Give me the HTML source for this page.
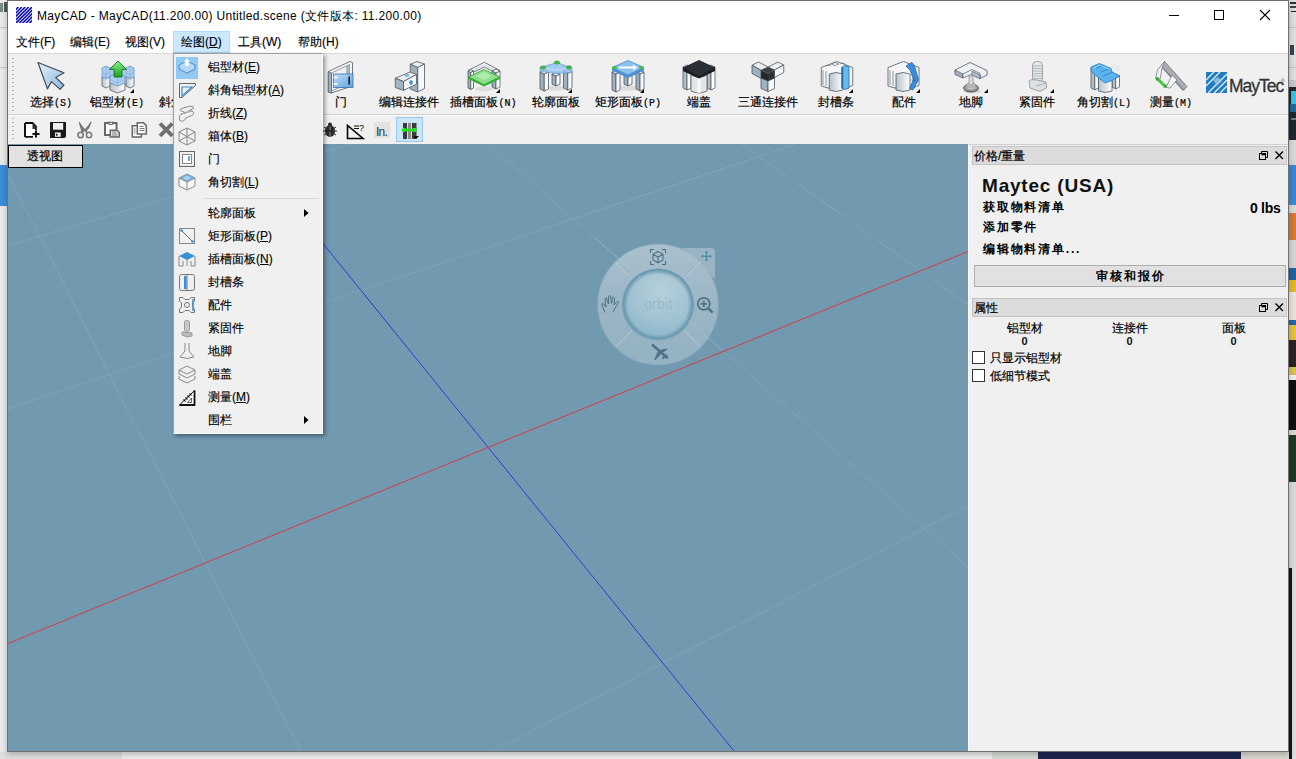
<!DOCTYPE html>
<html><head><meta charset="utf-8">
<style>
*{box-sizing:border-box;margin:0;padding:0}
html,body{width:1296px;height:759px;overflow:hidden;background:#ececec;font-family:"Liberation Sans",sans-serif;color:#000;position:relative}
.a{position:absolute}
.t{position:absolute;white-space:nowrap;font-size:12px;line-height:14px}
.lb{position:absolute;white-space:nowrap;font-size:12px;line-height:14px;text-align:center;-webkit-text-stroke:0.2px #000}
.ss{-webkit-text-stroke:0.2px #000}
.m{font-family:"Liberation Mono",monospace;font-size:10px}
svg{position:absolute;overflow:visible}
</style></head>
<body>

<div class="a" style="left:0;top:0;width:7px;height:759px;background:#e9e9e9"></div>
<div class="a" style="left:0;top:165px;width:7px;height:41px;background:#3b8fd6"></div>
<div class="a" style="left:0;top:752px;width:122px;height:7px;background:#dedede"></div>
<div class="a" style="left:122px;top:752px;width:870px;height:7px;background:#ededed"></div>
<div class="a" style="left:992px;top:752px;width:46px;height:7px;background:#d6dcd4"></div>
<div class="a" style="left:1038px;top:752px;width:203px;height:7px;background:#1d2550"></div>
<div class="a" style="left:1241px;top:752px;width:55px;height:7px;background:#d9d6d0"></div>
<div class="a" style="left:1289px;top:0px;width:7px;height:80px;background:#dedede"></div>
<div class="a" style="left:1289px;top:80px;width:7px;height:7px;background:#c8c8c8"></div>
<div class="a" style="left:1289px;top:87px;width:7px;height:53px;background:#1f272e"></div>
<div class="a" style="left:1289px;top:140px;width:7px;height:25px;background:#d8d8d8"></div>
<div class="a" style="left:1289px;top:165px;width:7px;height:40px;background:#3d87d0"></div>
<div class="a" style="left:1289px;top:205px;width:7px;height:8px;background:#d8d8d8"></div>
<div class="a" style="left:1289px;top:213px;width:7px;height:27px;background:#d67a36"></div>
<div class="a" style="left:1289px;top:240px;width:7px;height:28px;background:#d4d4d4"></div>
<div class="a" style="left:1289px;top:268px;width:7px;height:12px;background:#2362a2"></div>
<div class="a" style="left:1289px;top:280px;width:7px;height:12px;background:#e4b828"></div>
<div class="a" style="left:1289px;top:292px;width:7px;height:28px;background:#e8e4dc"></div>
<div class="a" style="left:1289px;top:320px;width:7px;height:5px;background:#2a62a0"></div>
<div class="a" style="left:1289px;top:325px;width:7px;height:15px;background:#e2c040"></div>
<div class="a" style="left:1289px;top:340px;width:7px;height:27px;background:#2e2222"></div>
<div class="a" style="left:1289px;top:367px;width:7px;height:8px;background:#d8c050"></div>
<div class="a" style="left:1289px;top:375px;width:7px;height:5px;background:#eeeeee"></div>
<div class="a" style="left:1289px;top:380px;width:7px;height:50px;background:#120e0e"></div>
<div class="a" style="left:1289px;top:430px;width:7px;height:5px;background:#d8d8d8"></div>
<div class="a" style="left:1289px;top:435px;width:7px;height:47px;background:#1d3b24"></div>
<div class="a" style="left:1289px;top:482px;width:7px;height:86px;background:#d9d9d9"></div>
<div class="a" style="left:1289px;top:568px;width:7px;height:191px;background:#12141c"></div>
<div class="a" style="left:1292px;top:568px;width:4px;height:191px;background:#dcdcdc"></div>
<div class="a" style="left:1290px;top:2px;width:6px;height:2px;background:#333"></div>
<div class="a" style="left:1290px;top:6px;width:6px;height:2px;background:#444"></div>
<div class="a" style="left:1291px;top:11px;width:5px;height:1px;background:#222"></div>
<div class="a" style="left:1289px;top:27px;width:7px;height:1px;background:#c4c4c4"></div>
<div class="a" style="left:1289px;top:67px;width:7px;height:1px;background:#c4c4c4"></div>
<div class="a" style="left:1290px;top:45px;width:4px;height:10px;background:#3a4250"></div>
<div class="a" style="left:0;top:27px;width:7px;height:1px;background:#c8c8c8"></div>
<div class="a" style="left:0;top:67px;width:7px;height:1px;background:#c8c8c8"></div>
<div class="a" style="left:0;top:3px;width:3px;height:9px;background:#7a8a80"></div>
<div class="a" style="left:4px;top:2px;width:3px;height:10px;background:#505560"></div>
<div class="a" style="left:1291px;top:91px;width:5px;height:13px;background:#36c4e6"></div>
<div class="a" style="left:1290px;top:104px;width:6px;height:8px;background:#1f6a9a"></div>
<div class="a" style="left:1291px;top:118px;width:5px;height:2px;background:#6a7a88"></div>
<div class="a" style="left:7px;top:0;width:1282px;height:752px;background:#fff;border:1px solid #707070;box-shadow:0 2px 6px rgba(0,0,0,.25)"></div>
<svg style="left:16px;top:7px;overflow:hidden" width="16" height="16" viewBox="0 0 16 16"><rect width="16" height="16" fill="#fff"/><path d="M-19.0 18 L-1.0 0 M-15.6 18 L2.4 0 M-12.2 18 L5.8 0 M-8.8 18 L9.2 0 M-5.4 18 L12.6 0 M-2.0 18 L16.0 0 M1.4 18 L19.4 0 M4.8 18 L22.8 0 M8.2 18 L26.2 0 M11.6 18 L29.6 0 M15.0 18 L33.0 0" stroke="#1010b0" stroke-width="1.6"/></svg>
<div class="t" style="left:37px;top:9px;letter-spacing:0.33px;color:#000">MayCAD - MayCAD(11.200.00) Untitled.scene (文件版本: 11.200.00)</div>
<svg style="left:1160px;top:0" width="128" height="31">
<path d="M9 15.5 H19" stroke="#000" stroke-width="1"/>
<rect x="54.5" y="10.5" width="9" height="9" fill="none" stroke="#000" stroke-width="1"/>
<path d="M100 10 L110 20 M110 10 L100 20" stroke="#000" stroke-width="1.1"/>
</svg>
<div class="a" style="left:173px;top:31px;width:57px;height:22px;background:#cce8ff;border:1px solid #b3dbff;border-bottom-color:#a6cbe8"></div>
<div class="t" style="left:16px;top:35px;-webkit-text-stroke:.15px #000">文件(F)</div>
<div class="t" style="left:70px;top:35px;-webkit-text-stroke:.15px #000">编辑(E)</div>
<div class="t" style="left:125px;top:35px;-webkit-text-stroke:.15px #000">视图(V)</div>
<div class="t" style="left:181px;top:35px;-webkit-text-stroke:.15px #000">绘图(<u>D</u>)</div>
<div class="t" style="left:238px;top:35px;-webkit-text-stroke:.15px #000">工具(W)</div>
<div class="t" style="left:298px;top:35px;-webkit-text-stroke:.15px #000">帮助(H)</div>
<div class="a" style="left:8px;top:53px;width:1280px;height:1px;background:#dadada"></div>
<div class="a" style="left:8px;top:54px;width:1280px;height:90px;background:#f0f0f0"></div>
<div class="a" style="left:8px;top:114px;width:1280px;height:1px;background:#d0d0d0"></div>
<div class="a" style="left:8px;top:115px;width:1280px;height:1px;background:#fafafa"></div>
<div class="a" style="left:12px;top:58px;width:2px;height:54px;background:repeating-linear-gradient(#b4b4b4 0 1.5px,transparent 1.5px 4px)"></div>
<div class="a" style="left:12px;top:118px;width:2px;height:24px;background:repeating-linear-gradient(#b4b4b4 0 1.5px,transparent 1.5px 4px)"></div>
<div class="lb" style="left:30px;top:95px;width:41px">选择<span class="m">(S)</span></div>
<div class="lb" style="left:90px;top:95px;width:54px">铝型材<span class="m">(E)</span></div>
<div class="lb" style="left:156px;top:95px;width:84px">斜角铝型材<span class="m">(A)</span></div>
<div class="lb" style="left:335px;top:95px;width:11px">门</div>
<div class="lb" style="left:379px;top:95px;width:60px">编辑连接件</div>
<div class="lb" style="left:450px;top:95px;width:67px">插槽面板<span class="m">(N)</span></div>
<div class="lb" style="left:532px;top:95px;width:48px">轮廓面板</div>
<div class="lb" style="left:595px;top:95px;width:65px">矩形面板<span class="m">(P)</span></div>
<div class="lb" style="left:687px;top:95px;width:24px">端盖</div>
<div class="lb" style="left:738px;top:95px;width:60px">三通连接件</div>
<div class="lb" style="left:818px;top:95px;width:36px">封槽条</div>
<div class="lb" style="left:891px;top:95px;width:25px">配件</div>
<div class="lb" style="left:959px;top:95px;width:24px">地脚</div>
<div class="lb" style="left:1019px;top:95px;width:36px">紧固件</div>
<div class="lb" style="left:1077px;top:95px;width:54px">角切割<span class="m">(L)</span></div>
<div class="lb" style="left:1150px;top:95px;width:42px">测量<span class="m">(M)</span></div>
<svg style="left:0;top:0" width="1296" height="759"><defs><linearGradient id="sg" x1="0" y1="0" x2="1" y2="1"><stop offset="0" stop-color="#e4f0fa"/><stop offset="1" stop-color="#8db6da"/></linearGradient></defs><path d="M38 62.5 L64 72.7 L55.7 77.4 L64 85.2 L60 89.4 L51.5 81.6 L47.4 88.9 Z" fill="url(#sg)" stroke="#3e4a56" stroke-width="1.2" stroke-linejoin="round"/><defs><linearGradient id="ag" x1="0" y1="0" x2="0" y2="1"><stop offset="0" stop-color="#8af08a"/><stop offset="1" stop-color="#1aa01e"/></linearGradient><linearGradient id="wg" x1="0" y1="0" x2="1" y2="0"><stop offset="0" stop-color="#b9c1c8"/><stop offset="1" stop-color="#ffffff"/></linearGradient></defs><path d="M102 77 V86 L106 88 L110 86 V77 Z" fill="url(#wg)" stroke="#555d65" stroke-width=".8"/><path d="M126 77 V86 L130 88 L134 86 V77 Z" fill="url(#wg)" stroke="#555d65" stroke-width=".8"/><path d="M102 68 L106 66 L110 68 L118 64.5 L126 68 L130 66 L134 68 V77 L130 79 L126 77 L118 81 L110 77 L106 79 L102 77 Z" fill="#9cc6f0" fill-opacity=".8" stroke="#5a8ccc" stroke-width=".7"/><path d="M102 72.5 L106 74.5 L110 72.5 M126 72.5 L130 74.5 L134 72.5 M106 66 V79 M130 66 V79 M110 68 V77 M126 68 V77" fill="none" stroke="#7aaae0" stroke-width=".6"/><path d="M110 83 V90 L117.5 93 L125 90 V83 Z" fill="url(#wg)" stroke="#555d65" stroke-width=".8"/><path d="M110 76 L117.5 73 L125 76 V83 L117.5 86 L110 83 Z" fill="#a8d0f4" fill-opacity=".85" stroke="#5a8ccc" stroke-width=".7"/><path d="M110 79.5 L117.5 82.5 L125 79.5 M117.5 76 V86" fill="none" stroke="#7aaae0" stroke-width=".6"/><path d="M118 61 L126.5 69.5 L122 69.5 L122 77 L114 77 L114 69.5 L109.5 69.5 Z" fill="url(#ag)" stroke="#15741a" stroke-width=".9" stroke-linejoin="round"/><path d="M134 89 V93 H130 Z" fill="#000"/><path d="M328.3 71.5 L350 61.5 L352.5 62.7 L352.5 86 L331 93 L328.3 92 Z" fill="#f7f9fa" stroke="#4e5862" stroke-width=".8"/><path d="M331.5 73 L349.5 64.5 V83 L331.5 91 Z" fill="#eef1f3" stroke="#6a747e" stroke-width=".7"/><path d="M328.3 71.5 L331.5 73 V93 L328.3 92 Z" fill="#9fb0be" stroke="#4e5862" stroke-width=".7"/><path d="M346 66 L349.5 64.5 V80 L346 81.5 Z" fill="#a8b6c2"/><defs><linearGradient id="dg" x1="0" y1="0" x2="1" y2="1"><stop offset="0" stop-color="#c4e0f8"/><stop offset="1" stop-color="#5fa2e0"/></linearGradient></defs><rect x="333.5" y="74" width="19.5" height="13.5" fill="url(#dg)" stroke="#3a70b0" stroke-width=".8"/><path d="M349.2 77 V84" stroke="#1a1a1a" stroke-width="1.6" stroke-linecap="round"/><path d="M334 77.5 H337 M334 84 H337" stroke="#fff" stroke-width="1.3" stroke-linecap="round"/><path d="M410.25 64.25 L417 61.5 L424.5 64 L417.75 67.5 Z" fill="#e8edf0" stroke="#4e5862" stroke-width=".8"/><path d="M410.25 64.25 L417.75 67.5 V92 L410.25 89 Z" fill="#9fb0be" stroke="#4e5862" stroke-width=".8"/><path d="M417.75 67.5 L424.5 64 V88.5 L417.75 92 Z" fill="#f6f8f9" stroke="#4e5862" stroke-width=".8"/><path d="M395.25 78.25 L410 72 L416.5 74.5 L403.5 81.5 Z" fill="#e8edf0" stroke="#4e5862" stroke-width=".8"/><path d="M395.25 78.25 L403.5 81.5 V90.5 L395.25 87.5 Z" fill="#a4b4c2" stroke="#4e5862" stroke-width=".8"/><path d="M403.5 81.5 L416.5 74.5 V84 L403.5 90.5 Z" fill="#f2f5f7" stroke="#4e5862" stroke-width=".8"/><ellipse cx="407" cy="75.5" rx="2.4" ry="1.2" fill="#6ab0e8"/><ellipse cx="411" cy="82.5" rx="1.4" ry="2" fill="#4a9ae0" stroke="#1f5ea8" stroke-width=".5"/><path d="M468 70.5 L484.3 62.3 L499.8 70.5 L495.5 72.7 L484.3 67 L472.5 72.7 Z" fill="#f4f6f8" stroke="#4e5862" stroke-width=".8"/><path d="M472 71 L484.3 65 L496 71" fill="none" stroke="#aab4bc" stroke-width=".6"/><path d="M468 71 L470.75 72.375 L470.75 89.375 L468 88 Z" fill="#9fb0be" stroke="#4e5862" stroke-width=".8"/><path d="M470.75 72.375 L473.5 71 L473.5 88 L470.75 89.375 Z" fill="#ffffff" stroke="#4e5862" stroke-width=".8"/><path d="M468 71 L470.75 69.625 L473.5 71 L470.75 72.375 Z" fill="#eef2f4" stroke="#4e5862" stroke-width=".8"/><path d="M492 71 L496.0 73.0 L496.0 89.0 L492 87 Z" fill="#9fb0be" stroke="#4e5862" stroke-width=".8"/><path d="M496.0 73.0 L500 71 L500 87 L496.0 89.0 Z" fill="#ffffff" stroke="#4e5862" stroke-width=".8"/><path d="M492 71 L496.0 69.0 L500 71 L496.0 73.0 Z" fill="#eef2f4" stroke="#4e5862" stroke-width=".8"/><ellipse cx="484" cy="89" rx="9" ry="2.5" fill="#000" opacity=".08"/><path d="M468.5 77 L484 69.5 L500 77 L484 84.5 Z" fill="#8ee08e" stroke="#2a9a2a" stroke-width=".8"/><path d="M468.5 77 L484 84.5 L500 77 V79 L484 86.5 L468.5 79 Z" fill="#2fae2f"/><path d="M476 76 L484 72 L492 76 L484 80 Z" fill="#c4f2c4" opacity=".6"/><path d="M500 89 V93 H496 Z" fill="#000"/><ellipse cx="556" cy="88" rx="10" ry="3" fill="#000" opacity=".08"/><path d="M552 74 L556.0 76.0 L556.0 86.0 L552 84 Z" fill="#9fb0be" stroke="#4e5862" stroke-width=".8"/><path d="M556.0 76.0 L560 74 L560 84 L556.0 86.0 Z" fill="#f6f8f9" stroke="#4e5862" stroke-width=".8"/><path d="M552 74 L556.0 72.0 L560 74 L556.0 76.0 Z" fill="#eef2f4" stroke="#4e5862" stroke-width=".8"/><path d="M540 72 L544.25 74.125 L544.25 91.125 L540 89 Z" fill="#9fb0be" stroke="#4e5862" stroke-width=".8"/><path d="M544.25 74.125 L548.5 72 L548.5 89 L544.25 91.125 Z" fill="#f6f8f9" stroke="#4e5862" stroke-width=".8"/><path d="M540 72 L544.25 69.875 L548.5 72 L544.25 74.125 Z" fill="#eef2f4" stroke="#4e5862" stroke-width=".8"/><path d="M563.5 71 L567.75 73.125 L567.75 90.125 L563.5 88 Z" fill="#9fb0be" stroke="#4e5862" stroke-width=".8"/><path d="M567.75 73.125 L572 71 L572 88 L567.75 90.125 Z" fill="#f6f8f9" stroke="#4e5862" stroke-width=".8"/><path d="M563.5 71 L567.75 68.875 L572 71 L567.75 73.125 Z" fill="#eef2f4" stroke="#4e5862" stroke-width=".8"/><path d="M540 67.5 L557 62.5 L572 68 V72.5 L556 73.5 L540 71.5 Z" fill="#93c3ee" fill-opacity=".85" stroke="#5a96cc" stroke-width=".6"/><path d="M540 67.5 L556 70 L572 68" fill="none" stroke="#cfe6fa" stroke-width=".8"/><ellipse cx="543" cy="67.5" rx="2.8" ry="1.6" fill="#3fbf3f" stroke="#1f8a25" stroke-width=".5"/><ellipse cx="557" cy="62.5" rx="2.8" ry="1.6" fill="#3fbf3f" stroke="#1f8a25" stroke-width=".5"/><ellipse cx="569" cy="67.3" rx="2.8" ry="1.6" fill="#3fbf3f" stroke="#1f8a25" stroke-width=".5"/><path d="M572 89 V93 H568 Z" fill="#000"/><ellipse cx="628" cy="88" rx="10" ry="3" fill="#000" opacity=".08"/><path d="M624 75 L628.0 77.0 L628.0 86.0 L624 84 Z" fill="#9fb0be" stroke="#4e5862" stroke-width=".8"/><path d="M628.0 77.0 L632 75 L632 84 L628.0 86.0 Z" fill="#f6f8f9" stroke="#4e5862" stroke-width=".8"/><path d="M624 75 L628.0 73.0 L632 75 L628.0 77.0 Z" fill="#eef2f4" stroke="#4e5862" stroke-width=".8"/><path d="M612 72 L616.0 74.0 L616.0 92.0 L612 90 Z" fill="#9fb0be" stroke="#4e5862" stroke-width=".8"/><path d="M616.0 74.0 L620 72 L620 90 L616.0 92.0 Z" fill="#f6f8f9" stroke="#4e5862" stroke-width=".8"/><path d="M612 72 L616.0 70.0 L620 72 L616.0 74.0 Z" fill="#eef2f4" stroke="#4e5862" stroke-width=".8"/><path d="M636 72 L640.0 74.0 L640.0 91.0 L636 89 Z" fill="#9fb0be" stroke="#4e5862" stroke-width=".8"/><path d="M640.0 74.0 L644 72 L644 89 L640.0 91.0 Z" fill="#f6f8f9" stroke="#4e5862" stroke-width=".8"/><path d="M636 72 L640.0 70.0 L644 72 L640.0 74.0 Z" fill="#eef2f4" stroke="#4e5862" stroke-width=".8"/><path d="M612 67.5 L628 60.5 L644 67.5 L628 75 Z" fill="#8cc2ef" stroke="#3f7fc0" stroke-width=".7"/><path d="M612 67.5 L628 75 L644 67.5 V70.5 L628 78 L612 70.5 Z" fill="#4a90d4"/><path d="M619 67.5 H634" stroke="#fff" stroke-width="2"/><path d="M633 64.5 L637.5 67.5 L633 70.5 Z" fill="#fff"/><ellipse cx="614.5" cy="67.5" rx="2.6" ry="1.5" fill="#3fbf3f"/><ellipse cx="641.5" cy="67.5" rx="2.6" ry="1.5" fill="#3fbf3f"/><path d="M644 89 V93 H640 Z" fill="#000"/><path d="M683 67 L687.0 69.0 L687.0 90.0 L683 88 Z" fill="#b4bec6" stroke="#4e5862" stroke-width=".8"/><path d="M687.0 69.0 L691 67 L691 88 L687.0 90.0 Z" fill="#ffffff" stroke="#4e5862" stroke-width=".8"/><path d="M683 67 L687.0 65.0 L691 67 L687.0 69.0 Z" fill="#eef2f4" stroke="#4e5862" stroke-width=".8"/><path d="M707 67 L711.0 69.0 L711.0 90.0 L707 88 Z" fill="#b4bec6" stroke="#4e5862" stroke-width=".8"/><path d="M711.0 69.0 L715 67 L715 88 L711.0 90.0 Z" fill="#ffffff" stroke="#4e5862" stroke-width=".8"/><path d="M707 67 L711.0 65.0 L715 67 L711.0 69.0 Z" fill="#eef2f4" stroke="#4e5862" stroke-width=".8"/><path d="M691 75 Q699 79 707 75 V91 Q699 95 691 91 Z" fill="#e2e5e8" stroke="#4e5862" stroke-width=".8"/><path d="M699 77 V93" stroke="#fff" stroke-width="3" opacity=".8"/><path d="M683 68 L699 60.5 L715 68 L699 75.5 Z" fill="#2b3038" stroke="#15181c" stroke-width=".8"/><path d="M683 68 L699 75.5 L715 68 V71 L699 78.5 L683 71 Z" fill="#1a1d22"/><path d="M752 65.25 L758.5 62 L768 67 L761 70.25 Z" fill="#e9eef0" stroke="#4e5862" stroke-width=".8"/><path d="M752 65.25 L761 70.25 V78.5 L752 73.5 Z" fill="#9fb0be" stroke="#4e5862" stroke-width=".8"/><path d="M768 67 L778 62 L783.75 65 L774.5 70 Z" fill="#e9eef0" stroke="#4e5862" stroke-width=".8"/><path d="M774.5 70 L783.75 65 V72.5 L774.5 77.5 Z" fill="#f6f8f9" stroke="#4e5862" stroke-width=".8"/><path d="M761 78 L768 81 V91.5 L761 88.5 Z" fill="#9fb0be" stroke="#4e5862" stroke-width=".8"/><path d="M768 81 L774.5 78 V88.5 L768 91.5 Z" fill="#f6f8f9" stroke="#4e5862" stroke-width=".8"/><path d="M761 70.25 L768 67 L774.5 70 L768 73.5 Z" fill="#3c3f43"/><path d="M761 70.25 L768 73.5 V81 L761 78 Z" fill="#26292c"/><path d="M768 73.5 L774.5 70 V78 L768 81 Z" fill="#303336"/><defs><linearGradient id="cg" x1="0" y1="0" x2="1" y2="0"><stop offset="0" stop-color="#b8c2ca"/><stop offset="1" stop-color="#ffffff"/></linearGradient></defs><path d="M821.25 67.5 L837 61.5 L852.75 67.5 V85.5 L846 88 L828 88 L821.25 86 Z" fill="#f4f6f7" stroke="#4e5862" stroke-width=".8"/><path d="M823 70 V85 M826 71 V86" stroke="#8a96a0" stroke-width="1"/><path d="M831 64 L835 62.5 L839 64 L835 65.5 Z M826 66 L829 65 L831 66 M840 64 L843 63 L845 64" fill="none" stroke="#6a747e" stroke-width=".7"/><path d="M829.25 74 Q836 71 843 74 V90 Q836 93 829.25 90 Z" fill="url(#cg)" stroke="#4e5862" stroke-width=".8"/><path d="M841.75 67 L845.5 65.5 L849 67 V88 L845.5 89.5 L841.75 88 Z" fill="#6ab8ec" stroke="#1a6aa8" stroke-width=".8"/><path d="M842.5 68 V88.5" stroke="#1a6aa8" stroke-width="1.4"/><path d="M853 89 V93 H849 Z" fill="#000"/><path d="M888 67.5 L903.5 61.5 L919 67.5 V85.5 L912 88 L895 88 L888 86 Z" fill="#f4f6f7" stroke="#4e5862" stroke-width=".8"/><path d="M890 70 V85 M893 71 V86" stroke="#8a96a0" stroke-width="1"/><path d="M896 74 Q903 71 910 74 V90 Q903 93 896 90 Z" fill="url(#cg)" stroke="#4e5862" stroke-width=".8"/><path d="M906 66 L912 62.5 L914.5 66 L918.5 80 L913 90 L909.5 88.5 L913.5 79.5 L910 70 Z" fill="#3a8ee0" stroke="#1a5aa0" stroke-width=".7"/><circle cx="913.5" cy="80" r="1.5" fill="none" stroke="#1a5aa0" stroke-width=".6"/><path d="M920 89 V93 H916 Z" fill="#000"/><defs><radialGradient id="fg" cx="50%" cy="40%" r="60%"><stop offset="0" stop-color="#e8eaec"/><stop offset="1" stop-color="#6e7276"/></radialGradient></defs><ellipse cx="972" cy="91" rx="9" ry="2.5" fill="#000" opacity=".1"/><ellipse cx="971" cy="88" rx="7.5" ry="4" fill="url(#fg)" stroke="#3a3d40" stroke-width=".7"/><ellipse cx="971" cy="85" rx="4.5" ry="2.2" fill="#c9ccd0" stroke="#666" stroke-width=".5"/><rect x="969" y="76" width="4" height="9" fill="#d8dbde" stroke="#777" stroke-width=".6"/><path d="M955 70 L970 62.5 L987 70.5 V75 L980 78.5 L980 75 L972 71.5 L963 76 L955 72.5 Z" fill="#eef1f4" stroke="#4e5862" stroke-width=".8"/><path d="M955 70 L963 74 V78 L955 74.5 Z" fill="#9fb0be" stroke="#4e5862" stroke-width=".7"/><path d="M963 74 L972 69.5 L980 73.5 V78 L972 74 L963 78 Z" fill="#f4f6f8" stroke="#4e5862" stroke-width=".7"/><path d="M972 69.5 L987 62 M980 73.5 L987 70" fill="none"/><path d="M972 71 L980 75 V79 L972 75 Z" fill="#a9bccc" stroke="#4e5862" stroke-width=".6"/><path d="M988 89 V93 H984 Z" fill="#000"/><rect x="1032.5" y="61.5" width="10" height="21" rx="4" fill="#e6e9eb" stroke="#8a9096" stroke-width=".8"/><path d="M1033 66 H1042 M1033 68.5 H1042 M1033 71 H1042 M1033 73.5 H1042 M1033 76 H1042 M1033 78.5 H1042" stroke="#9aa0a6" stroke-width=".7"/><path d="M1029 81 Q1030 79 1037 80 L1046 82 L1046.5 88 L1040 91.5 L1030 88 Z" fill="#dde0e3" stroke="#8a9096" stroke-width=".8"/><path d="M1036 86 L1046 83" stroke="#8a9096" stroke-width=".6"/><path d="M1054 89 V93 H1050 Z" fill="#000"/><path d="M1111 62 L1120 66 V72 L1111 68 Z" fill="#dfe8ee" opacity=".7"/><path d="M1091 68 L1094.75 69.875 L1094.75 89.875 L1091 88 Z" fill="#b4bec6" stroke="#4e5862" stroke-width=".8"/><path d="M1094.75 69.875 L1098.5 68 L1098.5 88 L1094.75 89.875 Z" fill="#f6f8f9" stroke="#4e5862" stroke-width=".8"/><path d="M1091 68 L1094.75 66.125 L1098.5 68 L1094.75 69.875 Z" fill="#eef2f4" stroke="#4e5862" stroke-width=".8"/><path d="M1112 76 L1115.75 77.875 L1115.75 88.875 L1112 87 Z" fill="#b4bec6" stroke="#4e5862" stroke-width=".8"/><path d="M1115.75 77.875 L1119.5 76 L1119.5 87 L1115.75 88.875 Z" fill="#ffffff" stroke="#4e5862" stroke-width=".8"/><path d="M1112 76 L1115.75 74.125 L1119.5 76 L1115.75 77.875 Z" fill="#eef2f4" stroke="#4e5862" stroke-width=".8"/><path d="M1098.5 78 Q1105 82 1112 80 V91 Q1105 94 1098.5 91 Z" fill="url(#cg)" stroke="#4e5862" stroke-width=".8"/><path d="M1091 67 L1099.5 63.5 L1111 68.5 L1112 72 L1119.5 75.5 L1112 80.5 L1105 83 L1098.5 78 L1091 71 Z" fill="#5ab2ee" stroke="#2a7ac0" stroke-width=".8"/><path d="M1096 68 L1103 65.5 M1101 72 L1108 69 M1103 76 L1113 72" stroke="#2a7ac0" stroke-width=".7"/><path d="M1093 68.5 L1099.5 65 L1109 69" fill="none" stroke="#a8dcfa" stroke-width=".8"/><path d="M1164.5 61.5 L1187 86.5 L1184 90 L1161.5 66 Z" fill="#a9adb1" stroke="#707478" stroke-width=".8"/><path d="M1161.5 66 L1184 90 L1183 91 L1161 67 Z" fill="#7e8286"/><path d="M1164.5 61.5 L1157.5 70 L1155.5 79 L1160 79.5 L1162 68 Z" fill="#f2f2f2" stroke="#7a7e82" stroke-width=".8"/><path d="M1172 75 L1166 87.5 L1170 88 L1177 80 Z" fill="#f4f4f4" stroke="#7a7e82" stroke-width=".8"/><path d="M1157.5 79 L1165 86" stroke="#3cc43c" stroke-width="3"/><path d="M1156 77.5 L1159.5 77.5 L1156 81 Z M1166.5 87.5 L1163 87.5 L1166.5 84 Z" fill="#2a9a2a"/><rect x="1206" y="72" width="21" height="21" fill="#1f7cc2"/><g stroke="#f0f0f0" stroke-width="1.2"><path d="M1206 80 L1214 72 M1206 86 L1220 72 M1208 93 L1227 74 M1214 93 L1227 80 M1220 93 L1227 86"/></g><path d="M1213 80 L1218 77 L1222 81 L1217 86 Z" fill="#9fc4e4" opacity=".8"/></svg>
<div class="t" style="left:1229px;top:75px;font-size:19px;line-height:22px;color:#333;letter-spacing:-1.1px;transform:scaleX(.92);transform-origin:0 0;-webkit-text-stroke:.3px #333">MayTec</div>
<div class="t" style="left:1281px;top:78px;font-size:5px;line-height:6px;color:#555">®</div>
<svg style="left:0;top:0" width="1296" height="759"><path d="M25 123 H32.5 L35.8 126.3 V130 M33 136.8 H25 Z" fill="none" stroke="#111" stroke-width="2" stroke-linejoin="miter"/><path d="M25 123 V137" stroke="#111" stroke-width="2"/><path d="M26 124 H32 L35 127 V131 L32.5 134 V136 H26 Z" fill="#fff"/><path d="M32.5 123 L35.8 126.3 V129 H32.5 Z" fill="#333"/><path d="M36 130.5 V137.5 M32.5 134 H39.5" stroke="#111" stroke-width="2"/><path d="M50 122 H66 V136.5 L64.5 138 H50 Z" fill="#1a1a1a"/><rect x="53" y="123" width="10.2" height="6.7" fill="#f0f0f0"/><rect x="55" y="132.5" width="5.7" height="4.3" fill="#f0f0f0"/><circle cx="56.8" cy="134.7" r="1" fill="#111"/><path d="M79.3 122.3 Q81 127 84.5 130.5 Q88 127 91 122.3 Q89.5 127.5 85.5 131.5 L88 133 M79.3 122.3 Q80.5 128 83.5 131.5 L81.5 133" fill="#777" stroke="#777" stroke-width="1.2" stroke-linejoin="round"/><ellipse cx="80.6" cy="135" rx="2.6" ry="2.8" fill="none" stroke="#777" stroke-width="1.6"/><ellipse cx="89" cy="135" rx="2.6" ry="2.8" fill="none" stroke="#777" stroke-width="1.6"/><rect x="105" y="123" width="11.5" height="12" fill="#fff" stroke="#6a6a6a" stroke-width="2"/><path d="M107.5 121.8 H114 V123.5 L112.5 125 H109 L107.5 123.5 Z" fill="#6a6a6a"/><path d="M109.5 123.5 H112" stroke="#fff" stroke-width="1"/><path d="M110.3 130.3 H117 L119.2 132.5 V137 H110.3 Z" fill="#fff" stroke="#6a6a6a" stroke-width="1.6"/><path d="M111.8 132 H116.5 M111.8 134 H117.5 M111.8 136 H117.5" stroke="#6a6a6a" stroke-width="1"/><rect x="132.3" y="125.8" width="9" height="11.2" fill="#fff" stroke="#6a6a6a" stroke-width="1.6"/><path d="M133.8 129 H135.5 M133.8 131 H135.5 M133.8 133 H135.5" stroke="#6a6a6a" stroke-width=".9"/><path d="M137.3 122.8 H143.5 L146.3 125.6 V134 H137.3 Z" fill="#fff" stroke="#6a6a6a" stroke-width="1.6"/><path d="M139.5 126.5 H143.5 M139.5 128.5 H144.5 M139.5 130.5 H144.5" stroke="#6a6a6a" stroke-width=".9"/><path d="M160 123.5 L172.3 135.8 M172.3 123.5 L160 135.8" stroke="#6e6e6e" stroke-width="3.8"/><ellipse cx="330" cy="131" rx="5" ry="6" fill="#2a2a2a"/><path d="M330 125 V137" stroke="#aaa" stroke-width=".8"/><g stroke="#2a2a2a" stroke-width="1"><path d="M324 127 L336 135 M336 127 L324 135 M323 131 H337"/></g><circle cx="330" cy="124.5" r="2" fill="#2a2a2a"/><path d="M347.5 125.5 V138.5 H363 Z" fill="none" stroke="#000" stroke-width="1.6"/><path d="M354 126 H359 M354 128.5 H359" stroke="#000" stroke-width="1"/><text x="359" y="131" font-family="Liberation Sans" font-size="9" fill="#000">?</text><rect x="374" y="122" width="16" height="16" fill="#e2e2e2"/><text x="376" y="135.5" font-family="Liberation Sans" font-size="12" fill="#333" letter-spacing="-0.8">In.</text><rect x="396.5" y="117.5" width="26" height="24" fill="#cce4f7" stroke="#99c9ef"/><rect x="403" y="123" width="4" height="16" fill="#3a3a3a"/><rect x="408" y="123" width="3" height="16" fill="#8a8a8a"/><rect x="412" y="123" width="4.5" height="16" fill="#3a3a3a"/><path d="M403 130 H415" stroke="#1ee61e" stroke-width="2.5"/><circle cx="404" cy="130" r="2.2" fill="#1ee61e"/><circle cx="414.5" cy="130" r="2.2" fill="#1ee61e"/><path d="M413 136 H419 L416 139 Z" fill="#111"/></svg>
<div class="a" style="left:8px;top:144px;width:960px;height:607px;background:#7199b0;overflow:hidden">
<svg style="left:0;top:0" width="960" height="607"><line x1="-15.4" y1="0" x2="292.8" y2="607" stroke="#80a7bd" stroke-width="0.8"/><line x1="0" y1="101.6" x2="343" y2="0" stroke="#80a7bd" stroke-width="0.8"/><line x1="0" y1="264.8" x2="788" y2="0" stroke="#80a7bd" stroke-width="0.8"/><line x1="480.6" y1="0" x2="960" y2="423" stroke="#80a7bd" stroke-width="0.8"/><line x1="733.5" y1="0" x2="960" y2="160.5" stroke="#80a7bd" stroke-width="0.8"/><line x1="484.7" y1="607" x2="960.4" y2="362" stroke="#80a7bd" stroke-width="0.8"/><line x1="234.42105263157896" y1="0" x2="726" y2="607" stroke="#7d98dc" stroke-width="2.2" opacity=".55"/><line x1="234.42105263157896" y1="0" x2="726" y2="607" stroke="#2a3fb0" stroke-width="1"/><line x1="0" y1="499.5" x2="960" y2="107.5" stroke="#c07a88" stroke-width="2" opacity=".45"/><line x1="0" y1="499.5" x2="960" y2="107.5" stroke="#b04c5c" stroke-width="1"/></svg>
</div>
<div class="a" style="left:8px;top:145px;width:75px;height:23px;background:#e1e1e1;border:1px solid #000"></div>
<div class="t ss" style="left:27px;top:149px">透视图</div>
<svg style="left:0;top:0" width="1296" height="759"><defs><radialGradient id="ig" cx="55%" cy="30%" r="75%"><stop offset="0" stop-color="#b6cfdb"/><stop offset=".55" stop-color="#a2c3d2"/><stop offset="1" stop-color="#86b5c9"/></radialGradient><linearGradient id="og" x1="0" y1="0" x2="0" y2="1"><stop offset="0" stop-color="#aac0ce"/><stop offset=".5" stop-color="#9bb5c4"/><stop offset="1" stop-color="#94b2c3"/></linearGradient><radialGradient id="sh" cx="50%" cy="50%" r="50%"><stop offset=".86" stop-color="#5f8ea5" stop-opacity="0"/><stop offset="1" stop-color="#5f8ea5" stop-opacity=".9"/></radialGradient></defs><path d="M682 248 H711.5 Q715 248 715 251.5 V279 Z" fill="#9ab4c3"/><circle cx="658" cy="304.5" r="61" fill="#8fb0c0" opacity=".6"/><circle cx="658" cy="304.5" r="60" fill="url(#og)"/><g stroke="#b4cbd6" stroke-width="1"><path d="M616 262.5 L633 279.5 M700 262.5 L683 279.5 M616 346.5 L633 329.5 M700 346.5 L683 329.5"/></g><g stroke="#93b1c0" stroke-width=".6"><path d="M617 261.5 L634 278.5 M699 261.5 L682 278.5 M617 347.5 L634 330.5 M699 347.5 L682 330.5"/></g><circle cx="658" cy="304.5" r="36" fill="#6e9db3"/><circle cx="658" cy="305" r="35" fill="url(#ig)"/><circle cx="658" cy="304.5" r="35" fill="url(#sh)"/><text x="644" y="309" font-family="Liberation Sans" font-size="14" fill="#98b9c9" letter-spacing=".3">orbit</text><line x1="595" y1="238" x2="722" y2="350" stroke="#c6dae3" stroke-width=".8" opacity=".3"/><g fill="none" stroke="#4f7385" stroke-width="1.1"><path d="M650.5 253 V249.5 H654 M662 249.5 H665.5 V253 M665.5 261 V264.5 H662 M654 264.5 H650.5 V261"/><path d="M658 251.5 L663 254.3 V260 L658 262.8 L653 260 V254.3 Z M653 254.3 L658 257.1 L663 254.3 M658 257.1 V262.8"/></g><g stroke="#3f8da0" stroke-width="1.1" fill="#3f8da0"><path d="M706.4 251.5 V261 M701.6 256.3 H711.2"/><path d="M706.4 251 L704.6 253 H708.2 Z M706.4 261.6 L704.6 259.6 H708.2 Z M701 256.3 L703 254.5 V258.1 Z M711.8 256.3 L709.8 254.5 V258.1 Z" stroke="none"/></g><g fill="none" stroke="#4f7385" stroke-width="1.8"><circle cx="703.8" cy="303.8" r="6"/><path d="M708.3 308.3 L712.6 312.6" stroke-width="2.4"/></g><path d="M703.8 300.6 V307 M700.6 303.8 H707" stroke="#4f7385" stroke-width="1.8"/><path d="M605 312.5 L602 305 Q601.5 303 603 303.5 L606 307 L605 299 Q605 297.5 606.5 298 L608.5 304 L608.5 296.5 Q609 295 610.5 296 L611.5 303.5 L612.5 297.5 Q613.5 296.5 614.5 298 L614 305 L617 301.5 Q618.5 301 618.5 302.5 L614.5 309 L613 312.5" fill="none" stroke="#4f7385" stroke-width="1"/><path d="M652.8 345.2 L667 357.5" stroke="#4f7488" stroke-width="2.6" stroke-linecap="round"/><path d="M659 350 L666.7 348.4 L667.5 349.6 L661.5 353.5 L655.2 360.2 L654.2 359.6 L657.5 352 Z" fill="#4f7488"/><path d="M663.5 355 L667.5 354.5 L667 356 L665.5 357.5 L662.5 359.5 L662 358.5 Z" fill="#4f7488"/></svg>
<div class="a" style="left:968px;top:144px;width:320px;height:607px;background:#f0f0f0;border-top:1px solid #d0d0d0;border-left:1px solid #fafafa"></div>
<div class="a" style="left:972px;top:146px;width:315px;height:19px;background:#dcdcdc;border:1px solid #c3c3c3"></div>
<div class="t ss" style="left:974px;top:149px">价格/重量</div>
<svg style="left:1259px;top:150px" width="28" height="12"><g fill="none" stroke="#000" stroke-width="1"><rect x="0.5" y="3.5" width="6" height="6"/><path d="M2.5 3.5 V1.5 H8.5 V7.5 H6.5"/><path d="M2.5 4.5 H6.5" stroke-width="1.6"/></g><path d="M16.5 1.5 L24 9 M24 1.5 L16.5 9" stroke="#000" stroke-width="1.4"/></svg>
<div class="t" style="left:982px;top:175px;font-size:19px;line-height:22px;font-weight:bold;color:#111;letter-spacing:0.8px">Maytec (USA)</div>
<div class="t" style="left:983px;top:200px;font-weight:bold;letter-spacing:1.8px">获取物料清单</div>
<div class="t" style="left:1250px;top:200px;font-weight:bold;font-size:14px;line-height:16px;letter-spacing:-0.3px">0 lbs</div>
<div class="t" style="left:983px;top:220px;font-weight:bold;letter-spacing:1.8px">添加零件</div>
<div class="t" style="left:983px;top:242px;font-weight:bold;letter-spacing:1.8px">编辑物料清单...</div>
<div class="a" style="left:974px;top:265px;width:312px;height:22px;background:#e1e1e1;border:1px solid #adadad"></div>
<div class="t" style="left:1096px;top:269px;font-weight:bold;letter-spacing:2px">审核和报价</div>
<div class="a" style="left:972px;top:298px;width:315px;height:19px;background:#dcdcdc;border:1px solid #c3c3c3"></div>
<div class="t ss" style="left:974px;top:301px">属性</div>
<svg style="left:1259px;top:302px" width="28" height="12"><g fill="none" stroke="#000" stroke-width="1"><rect x="0.5" y="3.5" width="6" height="6"/><path d="M2.5 3.5 V1.5 H8.5 V7.5 H6.5"/><path d="M2.5 4.5 H6.5" stroke-width="1.6"/></g><path d="M16.5 1.5 L24 9 M24 1.5 L16.5 9" stroke="#000" stroke-width="1.4"/></svg>
<div class="lb" style="left:984.5px;top:321px;width:80px">铝型材</div>
<div class="lb" style="left:984.5px;top:335px;width:80px;font-weight:bold;font-size:11px;line-height:13px;color:#111;-webkit-text-stroke:0">0</div>
<div class="lb" style="left:1089.5px;top:321px;width:80px">连接件</div>
<div class="lb" style="left:1089.5px;top:335px;width:80px;font-weight:bold;font-size:11px;line-height:13px;color:#111;-webkit-text-stroke:0">0</div>
<div class="lb" style="left:1193.5px;top:321px;width:80px">面板</div>
<div class="lb" style="left:1193.5px;top:335px;width:80px;font-weight:bold;font-size:11px;line-height:13px;color:#111;-webkit-text-stroke:0">0</div>
<div class="a" style="left:972px;top:351px;width:13px;height:13px;background:#fff;border:1px solid #333"></div>
<div class="t ss" style="left:990px;top:351px">只显示铝型材</div>
<div class="a" style="left:972px;top:369px;width:13px;height:13px;background:#fff;border:1px solid #333"></div>
<div class="t ss" style="left:990px;top:369px">低细节模式</div>
<div class="a" style="left:173px;top:53px;width:150px;height:381px;background:#f0f0f0;border:1px solid #a0a0a0;border-right-color:#fafafa;border-bottom-color:#fafafa;box-shadow:2px 2px 4px rgba(0,0,0,.4)"></div>
<div class="a" style="left:176px;top:57px;width:22px;height:22px;background:#91c9f7"></div>
<div class="a" style="left:204px;top:198px;width:115px;height:1px;background:#d7d7d7"></div>
<div class="t" style="left:208px;top:60px;-webkit-text-stroke:.15px #000">铝型材(<u>E</u>)</div>
<div class="t" style="left:208px;top:83px;-webkit-text-stroke:.15px #000">斜角铝型材(<u>A</u>)</div>
<div class="t" style="left:208px;top:106px;-webkit-text-stroke:.15px #000">折线(<u>Z</u>)</div>
<div class="t" style="left:208px;top:129px;-webkit-text-stroke:.15px #000">箱体(<u>B</u>)</div>
<div class="t" style="left:208px;top:152px;-webkit-text-stroke:.15px #000">门</div>
<div class="t" style="left:208px;top:175px;-webkit-text-stroke:.15px #000">角切割(<u>L</u>)</div>
<div class="t" style="left:208px;top:206px;-webkit-text-stroke:.15px #000">轮廓面板</div>
<div class="t" style="left:208px;top:229px;-webkit-text-stroke:.15px #000">矩形面板(<u>P</u>)</div>
<div class="t" style="left:208px;top:252px;-webkit-text-stroke:.15px #000">插槽面板(<u>N</u>)</div>
<div class="t" style="left:208px;top:275px;-webkit-text-stroke:.15px #000">封槽条</div>
<div class="t" style="left:208px;top:298px;-webkit-text-stroke:.15px #000">配件</div>
<div class="t" style="left:208px;top:321px;-webkit-text-stroke:.15px #000">紧固件</div>
<div class="t" style="left:208px;top:344px;-webkit-text-stroke:.15px #000">地脚</div>
<div class="t" style="left:208px;top:367px;-webkit-text-stroke:.15px #000">端盖</div>
<div class="t" style="left:208px;top:390px;-webkit-text-stroke:.15px #000">测量(<u>M</u>)</div>
<div class="t" style="left:208px;top:413px;-webkit-text-stroke:.15px #000">围栏</div>
<svg style="left:0;top:0" width="1296" height="759"><path d="M304 209 L308.5 213 L304 217 Z" fill="#000"/><path d="M304 416 L308.5 420 L304 424 Z" fill="#000"/><path d="M179 65 L187 61 L195 65 L187 69 Z" fill="#c6e2fa" stroke="#3a8ed6" stroke-width="1"/><path d="M179 65 V69 L187 73 L195 69 V65" fill="#b4d8f6" stroke="#3a8ed6" stroke-width="1"/><path d="M187 58 L190 62 H188.5 V66 H185.5 V62 H184 Z" fill="#fff"/><path d="M179 71 L187 75 L195 71" fill="none" stroke="#a8b8c8" stroke-width=".8"/><path d="M179.5 83.5 H195.5 V85.5 L182 97.5 H179.5 Z" fill="none" stroke="#666" stroke-width="1"/><path d="M182 87 H192 L182 96 Z" fill="none" stroke="#3a8ed6" stroke-width="1.2"/><path d="M180.4 108.9 L189.3 106.2 L193.1 106.6 L193.7 108.2 L189.3 110.4 L193.1 111.7 L193.7 113.6 L192.5 115.2 L185.5 118 L185.2 119.6 L182.3 121.5 L179.5 120.3 L179.5 115.8 L181 114.2 L185.5 112.7 L180.4 110.4 Z" fill="none" stroke="#8a8a8a" stroke-width="1"/><path d="M185.5 112.7 L189.3 110.4 M181 114.2 L192.5 111" fill="none" stroke="#9a9a9a" stroke-width=".8"/><path d="M187 128 L195 132 V141 L187 145 L179 141 V132 Z M179 132 L187 136.5 L195 132 M187 136.5 V145 M179 141 L187 136.5 L195 141 M187 128 V136.5" fill="none" stroke="#888" stroke-width="1"/><rect x="179.5" y="151.5" width="15" height="15" fill="none" stroke="#666"/><rect x="182.5" y="154.5" width="9" height="9" fill="#fff" stroke="#888"/><path d="M189 156 V161" stroke="#3a8ed6" stroke-width="1.5"/><path d="M179 178 L187 174 L195 178 V186 L187 190 L179 186 Z M179 178 L187 182 L195 178 M187 182 V190" fill="#f8f8f8" stroke="#888" stroke-width="1"/><path d="M181 178 L187 175 L193 178 L187 181 Z" fill="#a8d0f4" stroke="#3a8ed6" stroke-width=".8"/><rect x="179.5" y="228.5" width="15" height="15" fill="none" stroke="#888"/><path d="M181.5 230.5 L192.5 241.5" stroke="#666" stroke-width="1"/><circle cx="181.5" cy="230.5" r="1.3" fill="#3a8ed6"/><circle cx="192.5" cy="241.5" r="1.3" fill="#3a8ed6"/><path d="M179 256 L187 252 L195 256 L187 260 Z" fill="#3a8ed6"/><path d="M179 256 V266 H183 V261 M195 256 V266 H191 V261 M187 260 V266" fill="none" stroke="#888" stroke-width="1"/><rect x="179.5" y="274.5" width="15" height="16" rx="2" fill="none" stroke="#777"/><path d="M187 275 V290" stroke="#777"/><rect x="184" y="276" width="2.5" height="13" fill="#3a8ed6"/><path d="M179.5 297.5 H183 L185 299.5 H189 L191 297.5 H194.5 V301 L192.5 303 V307 L194.5 309 V312.5 H191 L189 310.5 H185 L183 312.5 H179.5 V309 L181.5 307 V303 L179.5 301 Z" fill="none" stroke="#777"/><circle cx="187" cy="305" r="2.5" fill="none" stroke="#777"/><path d="M193 299 V311" stroke="#3a8ed6" stroke-width="1.5"/><rect x="184.5" y="320.5" width="5" height="11" rx="2" fill="#c8c8c8" stroke="#999"/><path d="M182 332 L192 333 V336 L187 337 L182 335 Z" fill="#bbb" stroke="#999"/><path d="M185 343 V351 L180 357 Q187 360 194 357 L189 351 V343" fill="none" stroke="#888" stroke-width="1"/><path d="M179 370 L187 366 L195 370 L187 374 Z M179 370 V374 L187 378 L195 374 V370 M179 376 V379 L187 383 L195 379 V376" fill="none" stroke="#888" stroke-width="1"/><path d="M179.5 405 L194.5 390.5 V405 Z" fill="#fff" stroke="#111" stroke-width="1"/><path d="M179.5 405 H194.5 V390.5" fill="none" stroke="#111" stroke-width="1.8"/><path d="M183.5 399.5 L185.5 401.5 M185.5 397.5 L187.5 399.5 M187.5 395.5 L189.5 397.5 M189.5 393.5 L191.5 395.5" stroke="#111" stroke-width="1.1"/><path d="M187.5 402.5 L191.5 398 V402.5 Z" fill="none" stroke="#333" stroke-width=".8"/></svg>
</body></html>
